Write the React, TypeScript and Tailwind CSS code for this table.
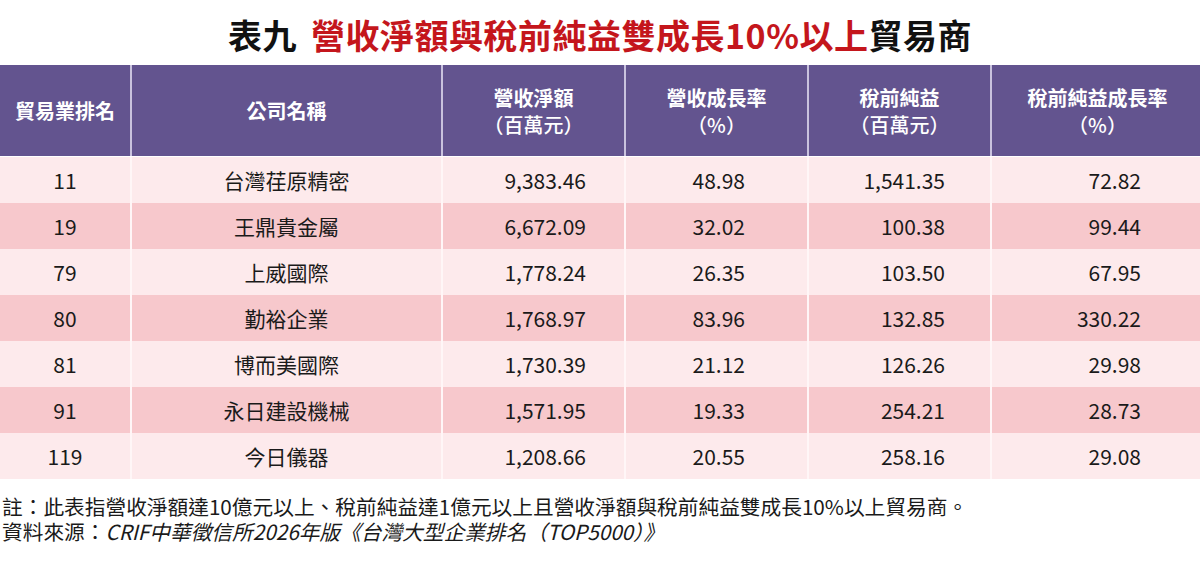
import React from 'react';

interface Row {
  rank: string;
  name: string;
  revenue: string;
  revenueGrowth: string;
  profit: string;
  profitGrowth: string;
}

const rows: Row[] = [
  { rank: '11', name: '台灣荏原精密', revenue: '9,383.46', revenueGrowth: '48.98', profit: '1,541.35', profitGrowth: '72.82' },
  { rank: '19', name: '王鼎貴金屬', revenue: '6,672.09', revenueGrowth: '32.02', profit: '100.38', profitGrowth: '99.44' },
  { rank: '79', name: '上威國際', revenue: '1,778.24', revenueGrowth: '26.35', profit: '103.50', profitGrowth: '67.95' },
  { rank: '80', name: '勤裕企業', revenue: '1,768.97', revenueGrowth: '83.96', profit: '132.85', profitGrowth: '330.22' },
  { rank: '81', name: '博而美國際', revenue: '1,730.39', revenueGrowth: '21.12', profit: '126.26', profitGrowth: '29.98' },
  { rank: '91', name: '永日建設機械', revenue: '1,571.95', revenueGrowth: '19.33', profit: '254.21', profitGrowth: '28.73' },
  { rank: '119', name: '今日儀器', revenue: '1,208.66', revenueGrowth: '20.55', profit: '258.16', profitGrowth: '29.08' },
];

const cols = 'grid grid-cols-[130px_311px_183px_183px_183px_213px]';

export default function App() {
  return (
    <div
      className="w-[1200px] h-[566px] bg-white text-[#1a1a1a] overflow-hidden"
      style={{ fontFamily: '"Noto Sans CJK TC", "Noto Sans", sans-serif' }}
    >
      {/* Title */}
      <div className="h-[65px] flex items-center justify-center pt-[5px]">
        <h1 className="text-[34px] font-bold leading-none tracking-[0.5px]">
          <span className="text-[#111]">表九</span>
          <span className="ml-[14px] text-[#c4161c]">營收淨額與稅前純益雙成長10%以上</span>
          <span className="text-[#111]">貿易商</span>
        </h1>
      </div>

      {/* Table header */}
      <div className={`${cols} h-[92px] bg-[#63548f] text-white text-[20px] font-bold leading-[27px] border-b border-white`}>
        <div className="flex items-center justify-center">貿易業排名</div>
        <div className="flex items-center justify-center border-l-2 border-[#c9c2de]">公司名稱</div>
        <div className="flex flex-col items-center justify-center border-l-2 border-[#c9c2de]">
          <span>營收淨額</span>
          <span className="font-medium">（百萬元）</span>
        </div>
        <div className="flex flex-col items-center justify-center border-l-2 border-[#c9c2de]">
          <span>營收成長率</span>
          <span className="font-medium">（%）</span>
        </div>
        <div className="flex flex-col items-center justify-center border-l-2 border-[#c9c2de]">
          <span>稅前純益</span>
          <span className="font-medium">（百萬元）</span>
        </div>
        <div className="flex flex-col items-center justify-center border-l-2 border-[#c9c2de]">
          <span>稅前純益成長率</span>
          <span className="font-medium">（%）</span>
        </div>
      </div>

      {/* Table body */}
      {rows.map((r, i) => (
        <div
          key={r.rank}
          className={`${cols} h-[46px] text-[21px] leading-none ${i % 2 === 0 ? 'bg-[#fdeaec]' : 'bg-[#f7c8cc]'}`}
        >
          <div className="flex items-center justify-center">{r.rank}</div>
          <div className="flex items-center justify-center border-l-2 border-[#fff6f7]">{r.name}</div>
          <div className="flex items-center justify-end pr-[38px] border-l-2 border-[#fff6f7]">{r.revenue}</div>
          <div className="flex items-center justify-end pr-[62px] border-l-2 border-[#fff6f7]">{r.revenueGrowth}</div>
          <div className="flex items-center justify-end pr-[45px] border-l-2 border-[#fff6f7]">{r.profit}</div>
          <div className="flex items-center justify-end pr-[62px] border-l-2 border-[#fff6f7]">{r.profitGrowth}</div>
        </div>
      ))}

      {/* Notes */}
      <div className="mt-[15px] pl-[2px] text-[20.7px] leading-[25px]">
        <p>註：此表指營收淨額達10億元以上、稅前純益達1億元以上且營收淨額與稅前純益雙成長10%以上貿易商。</p>
        <p>
          資料來源：<span className="italic">CRIF中華徵信所2026年版《台灣大型企業排名（TOP5000）》</span>
        </p>
      </div>
    </div>
  );
}
